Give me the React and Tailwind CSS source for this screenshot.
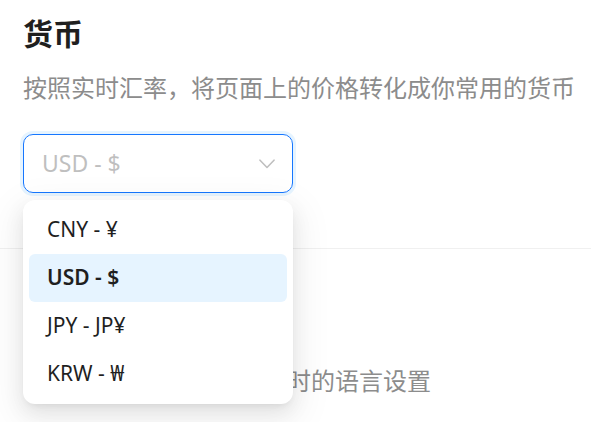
import React from "react";

const font = { fontFamily: '"Noto Sans", "Noto Sans CJK SC", sans-serif' };

export default function App() {
  const items = [
    { label: "CNY - ¥", active: false },
    { label: "USD - $", active: true },
    { label: "JPY - JP¥", active: false },
    { label: "KRW - ₩", active: false },
  ];
  return (
    <div className="w-[591px] h-[422px] bg-white overflow-hidden" style={font}>
      <div className="px-[23px] pt-[15px]">
        <div className="text-[30px] leading-[38px] font-semibold text-[#1f1f1f]">货币</div>
        <div className="mt-[17px] text-[24px] leading-[36px] text-[#8c8c8c] whitespace-nowrap">
          按照实时汇率，将页面上的价格转化成你常用的货币
        </div>
        <div className="relative mt-[28px] w-[270px]">
          <div className="h-[59px] rounded-[10px] border border-[#1677ff] shadow-[0_0_0_3px_rgba(5,145,255,0.1)] flex items-center justify-between pl-[18px] pr-[17px]">
            <span className="text-[23px] text-[#bfbfbf]">USD - $</span>
            <svg width="16" height="10" viewBox="0 0 16 10" fill="none">
              <path d="M1 1.2 L8 8.5 L15 1.2" stroke="#bfbfbf" strokeWidth="1.6" strokeLinecap="round" strokeLinejoin="round" />
            </svg>
          </div>
          <div className="absolute left-0 top-[66px] w-[270px] z-10 bg-white rounded-[12px] p-[6px] shadow-[0_8px_20px_0_rgba(0,0,0,0.08),0_4px_8px_-5px_rgba(0,0,0,0.12),0_11px_35px_10px_rgba(0,0,0,0.05)]">
            {items.map((it) => (
              <div
                key={it.label}
                className={
                  "h-[48px] flex items-center pl-[18px] rounded-[6px] text-[21px] text-[#1f1f1f] " +
                  (it.active ? "bg-[#e6f4ff] font-semibold" : "")
                }
              >
                {it.label}
              </div>
            ))}
          </div>
        </div>
      </div>
      <div className="mt-[55px] h-px bg-[#f0f0f0]" />
      <div className="px-[23px]">
        <div className="mt-[59px] text-[30px] leading-[38px] font-semibold text-[#1f1f1f]">语言</div>
        <div className="mt-[17px] text-[24px] leading-[36px] text-[#8c8c8c] whitespace-nowrap">
          选择你在浏览各页面内容时的语言设置
        </div>
      </div>
    </div>
  );
}
